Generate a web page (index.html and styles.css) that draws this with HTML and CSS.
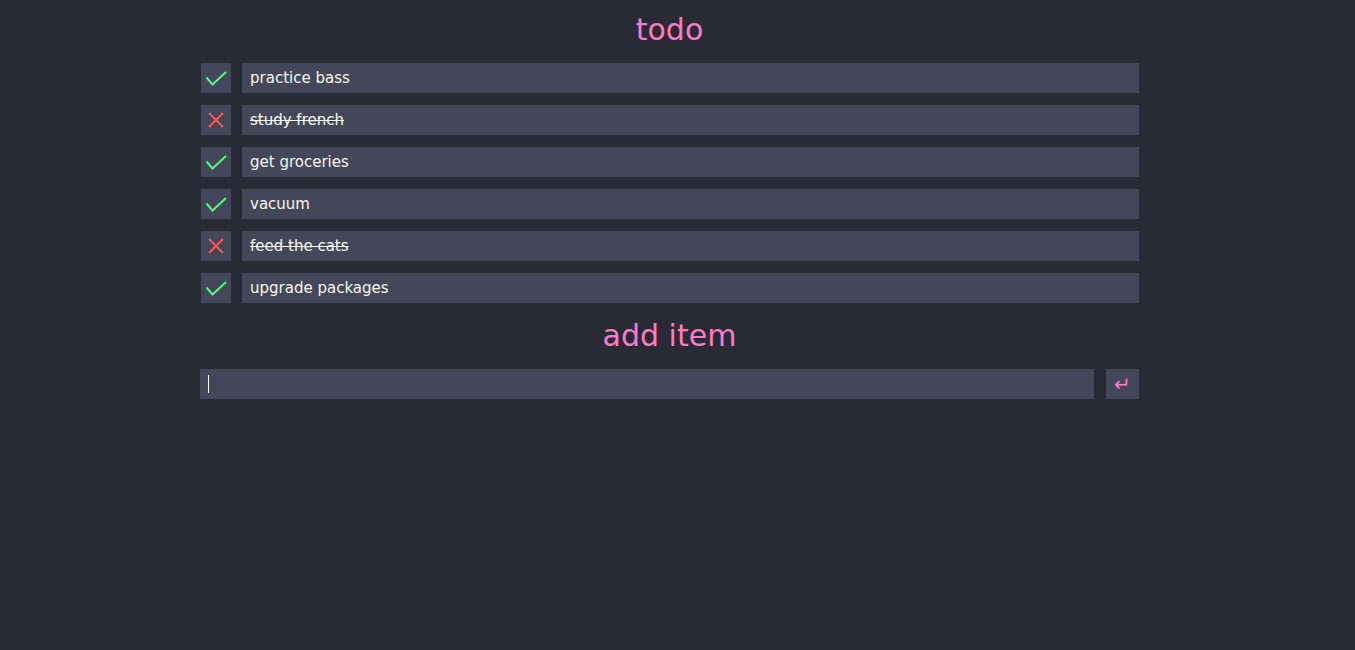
FILE: index.html
```html
<!DOCTYPE html>
<html>
<head>
<meta charset="utf-8">
<link rel="stylesheet" href="styles.css">
</head>
<body>
<main class="app">
  <h1 class="title">todo</h1>
  <ul class="list">
    <li class="row">
      <span class="box"><svg viewBox="0 0 30 30" width="30" height="30"><path d="M5.5 14.5 L11.5 21.5 L25 9" class="ok"/></svg></span>
      <span class="item">practice bass</span>
    </li>
    <li class="row">
      <span class="box"><svg viewBox="0 0 30 30" width="30" height="30"><path d="M8 8 L22 22 M22 8 L8 22" class="no"/></svg></span>
      <span class="item done">study french</span>
    </li>
    <li class="row">
      <span class="box"><svg viewBox="0 0 30 30" width="30" height="30"><path d="M5.5 14.5 L11.5 21.5 L25 9" class="ok"/></svg></span>
      <span class="item">get groceries</span>
    </li>
    <li class="row">
      <span class="box"><svg viewBox="0 0 30 30" width="30" height="30"><path d="M5.5 14.5 L11.5 21.5 L25 9" class="ok"/></svg></span>
      <span class="item">vacuum</span>
    </li>
    <li class="row">
      <span class="box"><svg viewBox="0 0 30 30" width="30" height="30"><path d="M8 8 L22 22 M22 8 L8 22" class="no"/></svg></span>
      <span class="item done">feed the cats</span>
    </li>
    <li class="row">
      <span class="box"><svg viewBox="0 0 30 30" width="30" height="30"><path d="M5.5 14.5 L11.5 21.5 L25 9" class="ok"/></svg></span>
      <span class="item">upgrade packages</span>
    </li>
  </ul>
  <h2 class="title">add item</h2>
  <div class="add">
    <div class="field"><input class="input" type="text"><span class="caret"></span></div>
    <button class="enter">↵</button>
  </div>
</main>
</body>
</html>
```
FILE: styles.css
```css
html, body {
  margin: 0;
  padding: 0;
  background: #282a36;
  height: 100%;
}
body {
  font-family: "DejaVu Sans", sans-serif;
  font-size: 15px;
  color: #f8f8f2;
}
.app {
  width: 939px;
  margin-left: 200px;
  padding-top: 10px;
}
.title {
  margin: 0;
  font-size: 30px;
  font-weight: normal;
  color: #ff79c6;
  text-align: center;
  line-height: 40px;
}
.list {
  list-style: none;
  margin: 13px 0 0;
  padding: 0;
  display: flex;
  flex-direction: column;
  gap: 12px;
}
.row {
  display: flex;
  gap: 11px;
  height: 30px;
  padding-left: 1px;
}
.box {
  width: 30px;
  height: 30px;
  background: #44475a;
  display: block;
  flex: none;
}
.box svg { display: block; }
.ok { fill: none; stroke: #50fa7b; stroke-width: 2; }
.no { fill: none; stroke: #ff5555; stroke-width: 2; }
.item {
  flex: 1;
  background: #44475a;
  padding-left: 8px;
  line-height: 30px;
}
.done { text-decoration: line-through; }
h2.title { margin-top: 13px; }
.add {
  display: flex;
  gap: 12px;
  margin-top: 13px;
  height: 30px;
}
.field {
  position: relative;
  flex: 1;
}
.input {
  box-sizing: border-box;
  width: 100%;
  height: 30px;
  border: none;
  outline: none;
  background: #44475a;
  color: #f8f8f2;
  font: inherit;
  padding: 0 8px;
  margin: 0;
  display: block;
}
.caret {
  position: absolute;
  left: 8px;
  top: 6px;
  width: 1px;
  height: 18px;
  background: #f8f8f2;
}
.enter {
  width: 33px;
  height: 30px;
  border: none;
  padding: 0;
  margin: 0;
  background: #44475a;
  color: #ff79c6;
  font-family: "DejaVu Sans", sans-serif;
  font-size: 20px;
  line-height: 30px;
  flex: none;
}
```
